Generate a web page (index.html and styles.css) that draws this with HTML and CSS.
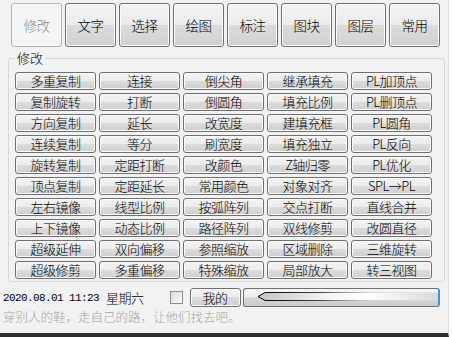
FILE: index.html
```html
<!DOCTYPE html>
<html lang="zh-CN">
<head>
    <meta charset="UTF-8">
    <meta name="viewport" content="width=device-width, initial-scale=1.0">
    <title>修改工具</title>
    <link rel="stylesheet" href="styles.css">
</head>
<body>
<div class="window">
    <!-- Top tabs -->
    <div class="tabs">
        <button class="tab active">修改</button>
        <button class="tab">文字</button>
        <button class="tab">选择</button>
        <button class="tab">绘图</button>
        <button class="tab">标注</button>
        <button class="tab">图块</button>
        <button class="tab">图层</button>
        <button class="tab">常用</button>
    </div>

    <!-- Command group -->
    <fieldset class="group">
        <legend>修改</legend>
        <div class="grid">
            <button class="btn">多重复制</button>
            <button class="btn">连接</button>
            <button class="btn">倒尖角</button>
            <button class="btn">继承填充</button>
            <button class="btn">PL加顶点</button>

            <button class="btn">复制旋转</button>
            <button class="btn">打断</button>
            <button class="btn">倒圆角</button>
            <button class="btn">填充比例</button>
            <button class="btn">PL删顶点</button>

            <button class="btn">方向复制</button>
            <button class="btn">延长</button>
            <button class="btn">改宽度</button>
            <button class="btn">建填充框</button>
            <button class="btn">PL圆角</button>

            <button class="btn">连续复制</button>
            <button class="btn">等分</button>
            <button class="btn">刷宽度</button>
            <button class="btn">填充独立</button>
            <button class="btn">PL反向</button>

            <button class="btn">旋转复制</button>
            <button class="btn">定距打断</button>
            <button class="btn">改颜色</button>
            <button class="btn">Z轴归零</button>
            <button class="btn">PL优化</button>

            <button class="btn">顶点复制</button>
            <button class="btn">定距延长</button>
            <button class="btn">常用颜色</button>
            <button class="btn">对象对齐</button>
            <button class="btn">SPL→PL</button>

            <button class="btn">左右镜像</button>
            <button class="btn">线型比例</button>
            <button class="btn">按弧阵列</button>
            <button class="btn">交点打断</button>
            <button class="btn">直线合并</button>

            <button class="btn">上下镜像</button>
            <button class="btn">动态比例</button>
            <button class="btn">路径阵列</button>
            <button class="btn">双线修剪</button>
            <button class="btn">改圆直径</button>

            <button class="btn">超级延伸</button>
            <button class="btn">双向偏移</button>
            <button class="btn">参照缩放</button>
            <button class="btn">区域删除</button>
            <button class="btn">三维旋转</button>

            <button class="btn">超级修剪</button>
            <button class="btn">多重偏移</button>
            <button class="btn">特殊缩放</button>
            <button class="btn">局部放大</button>
            <button class="btn">转三视图</button>
        </div>
    </fieldset>

    <!-- Status row -->
    <div class="status">
        <span class="date">2020.08.01 11:23</span>
        <span class="week">星期六</span>
        <span class="check"></span>
        <button class="btn mine">我的</button>
        <div class="slider">
            <svg width="194" height="17" viewBox="0 0 194 17">
                <defs>
                    <linearGradient id="body" x1="0" x2="1" y1="0" y2="0">
                        <stop offset="0" stop-color="#c4c4c4"/>
                        <stop offset="0.4" stop-color="#f6f6f6"/>
                        <stop offset="0.6" stop-color="#ffffff"/>
                        <stop offset="1" stop-color="#dadada"/>
                    </linearGradient>
                    <linearGradient id="edge" x1="0" x2="1" y1="0" y2="0">
                        <stop offset="0" stop-color="#000"/>
                        <stop offset="0.35" stop-color="#444"/>
                        <stop offset="0.65" stop-color="#bbb" stop-opacity="0.4"/>
                        <stop offset="1" stop-color="#bbb" stop-opacity="0"/>
                    </linearGradient>
                </defs>
                <path d="M194 3.5 H21 L14 7.5 L21 11.5 H194 Z" fill="url(#body)"/>
                <path d="M194 3.5 H21 L14 7.5 L21 11.5 H194" fill="none" stroke="url(#edge)" stroke-width="1"/>
            </svg>
        </div>
    </div>

    <div class="motto">穿别人的鞋，走自己的路，让他们找去吧。</div>
</div>
</body>
</html>
```

FILE: styles.css
```css
html, body {
    margin: 0;
    padding: 0;
    background: #ffffff;
    overflow: hidden;
}
.window {
    width: 448px;
    height: 333px;
    background: #f2f2f2;
    border-right: 1px solid #dadada;
    border-bottom: 4px solid #2e2e2e;
    font-family: "Noto Sans CJK SC", sans-serif;
    font-size: 13px;
    font-weight: 300;
    color: #000;
}
.tabs {
    display: flex;
    gap: 3px;
    padding: 3px 0 0 11px;
}
.btn, .tab {
    font-family: "Noto Sans CJK SC", sans-serif;
    font-size: 13px;
    font-weight: 300;
    letter-spacing: -0.5px;
    color: #000;
    padding: 0;
    border: 1px solid #707070;
    border-radius: 3px;
    background: linear-gradient(#f3f3f3 0%, #ececec 50%, #dcdcdc 50%, #d0d0d0 100%);
    box-shadow: inset 0 0 0 1px #fbfbfb;
    cursor: pointer;
}
.tab {
    width: 51px;
    height: 44px;
    font-size: 13.5px;
}
.tab.active {
    background: #f5f5f5;
    border-color: #b4b4b4;
    box-shadow: none;
    color: #8a8a8a;
}
.group {
    margin: 4px 0 0 8px;
    width: 423px;
    padding: 7px 6px 2px 6px;
    border: 1px solid #d5d9dc;
    border-radius: 3px;
}
.group legend {
    padding: 0 2px;
    font-size: 13px;
    line-height: 14px;
}
.grid {
    display: grid;
    grid-template-columns: repeat(5, 81px);
    grid-auto-rows: 18px;
    column-gap: 3px;
    row-gap: 3px;
}
.grid .btn {
    line-height: 16px;
}
.status {
    display: flex;
    align-items: center;
    height: 19px;
    margin-top: 6px;
    padding-left: 3px;
}
.date {
    font-family: "Liberation Mono", monospace;
    font-size: 11px;
    letter-spacing: -0.6px;
    margin-right: 7px;
}
.week {
    font-size: 13px;
    letter-spacing: -0.5px;
}
.check {
    width: 11px;
    height: 11px;
    margin-left: 26px;
    border: 1px solid #8e8f8f;
    background: linear-gradient(135deg, #dcdcdc, #fbfbfb);
}
.mine {
    width: 51px;
    height: 19px;
    margin-left: 7px;
    line-height: 17px;
}
.slider {
    width: 194px;
    height: 17px;
    margin-left: 2px;
    border: 1px solid #707070;
    border-right: 2px solid #3a95d8;
    border-radius: 3px;
    background: linear-gradient(#f6f6f6 0%, #ededed 45%, #d6d6d6 55%, #cbcbcb 100%);
    overflow: hidden;
}
.slider svg {
    display: block;
}
.motto {
    margin-top: 3px;
    padding-left: 3px;
    font-size: 12.5px;
    line-height: 14px;
    color: #a6a6a6;
}
```
